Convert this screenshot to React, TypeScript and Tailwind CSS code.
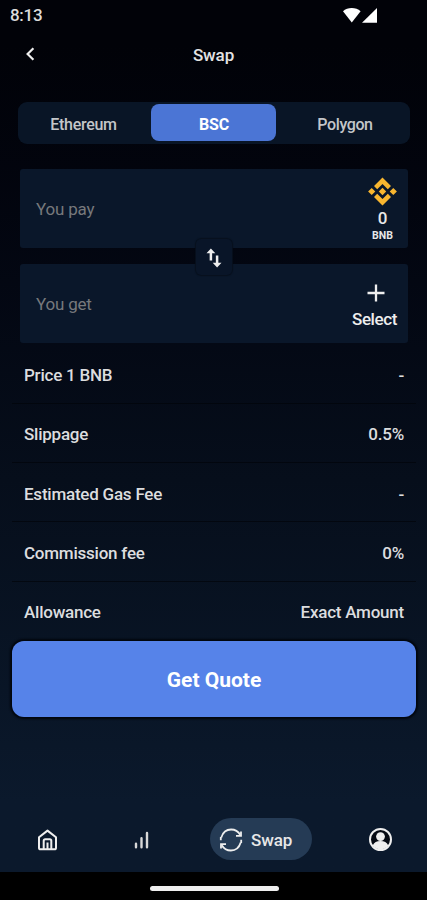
import React from "react";

const rows = [
  { label: "Price 1 BNB", value: "-" },
  { label: "Slippage", value: "0.5%" },
  { label: "Estimated Gas Fee", value: "-" },
  { label: "Commission fee", value: "0%" },
  { label: "Allowance", value: "Exact Amount" },
];

function StatusBar() {
  return (
    <div className="flex h-8 shrink-0 items-center justify-between pr-[49px] pb-[2px] pl-[10px]">
      <span className="text-[17px] leading-[30px] font-medium tracking-[-0.3px] text-[#dcdcdc]">8:13</span>
      <svg width="36" height="17" viewBox="0 0 36 17" fill="#fff">
        <path d="M1 4.2C5.5-.1 14-.1 18.6 4.2L9.8 15.6z" />
        <path d="M35 1v14.8H20z" />
      </svg>
    </div>
  );
}

function Header() {
  return (
    <header className="grid h-[46px] shrink-0 grid-cols-3 items-center px-[25px]">
      <svg width="11" height="16" viewBox="0 0 11 16" fill="none" stroke="#eee" strokeWidth="2.2">
        <path d="M8.4 1.2 2.6 7l5.8 5.8" />
      </svg>
      <h1 className="text-center text-[17px] leading-6 font-medium tracking-[-0.1px] text-[#e3e3e3]">Swap</h1>
    </header>
  );
}

function NetworkTabs() {
  return (
    <div className="mr-[17px] ml-[18px] mt-[24px] grid h-[42px] shrink-0 grid-cols-[133px_125px_1fr] items-center rounded-[9px] bg-[#091526] text-center text-[16px] text-[#c4c6c9]">
      <span className="pt-[3px] pr-[2px] font-medium tracking-[-0.3px]">Ethereum</span>
      <span className="mb-px flex h-[37px] items-center justify-center rounded-[8px] bg-[#4b75d5] pt-[4px] pl-px font-bold tracking-[-0.2px] text-white">BSC</span>
      <span className="pt-[3px] pl-1 font-medium tracking-[-0.4px]">Polygon</span>
    </div>
  );
}

function BnbLogo() {
  return (
    <svg className="shrink-0" width="29" height="29" viewBox="0 0 29 29" fill="#f8b62f">
      <path d="M14.5.5 23 9l-3.2 3.2-5.3-5.3-5.3 5.3L6 9zM14.5 28.5 23 20l-3.2-3.2-5.3 5.3-5.3-5.3L6 20z" />
      <path d="m14.5 10.8 3.7 3.7-3.7 3.7-3.7-3.7zM3.7 10.9l3.6 3.6-3.6 3.6-3.6-3.6zM25.3 10.9l3.6 3.6-3.6 3.6-3.6-3.6z" />
    </svg>
  );
}

function SwapCards() {
  return (
    <section className="relative mr-[19px] ml-5 mt-[25px] flex shrink-0 flex-col gap-4">
      <div className="flex h-[79px] items-center justify-between rounded-[3px] bg-[#0a172a] pr-[11px] pl-4">
        <span className="pt-[2px] text-[17px] tracking-[-0.2px] text-[#77797c]">You pay</span>
        <div className="flex w-[29px] flex-col items-center pt-px text-[#e8e8e8]">
          <BnbLogo />
          <span className="text-[17px] leading-[24px] font-medium">0</span>
          <span className="text-[10.5px] leading-[12px] font-bold">BNB</span>
        </div>
      </div>
      <div className="flex h-[79px] items-center justify-between rounded-[3px] bg-[#0a172a] pr-[11px] pl-4">
        <span className="pt-[2px] text-[17px] tracking-[-0.2px] text-[#77797c]">You get</span>
        <div className="flex flex-col pt-[7px] text-[#eee]">
          <svg className="ml-[15px]" width="18" height="18" viewBox="0 0 18 18" stroke="#eee" strokeWidth="2.3">
            <path d="M9 .5v17M.5 9h17" />
          </svg>
          <span className="mt-[5px] text-[17px] leading-6 font-medium tracking-[-0.4px]">Select</span>
        </div>
      </div>
      <button className="absolute top-[70px] left-[176px] flex size-[36px] items-center justify-center rounded-[5px] bg-[#091528] shadow-[0_0_1px_1px_#07101d]">
        <svg className="mt-px" width="16" height="20" viewBox="0 0 16 20" fill="none" stroke="#eee" strokeWidth="2.5">
          <path d="M4.9 12.5V3M11.1 7.5V17" />
          <path d="M4.9.5.5 5.2h8.8zM11.1 19.5l4.4-4.7H6.7z" fill="#eee" stroke="none" />
        </svg>
      </button>
    </section>
  );
}

function QuoteDetails() {
  return (
    <dl className="mr-[11px] ml-3 mt-[2px] shrink-0 text-[17px] font-medium tracking-[-0.23px] text-[#dcdddf]">
      {rows.map((row) => (
        <div key={row.label} className="flex h-[59.15px] items-center justify-between border-b border-[#01040a]/70 px-3 pt-[4px] last:border-0 last:pt-[3px]">
          <dt>{row.label}</dt>
          <dd>{row.value}</dd>
        </div>
      ))}
    </dl>
  );
}

function BottomNav() {
  return (
    <nav className="flex h-[65px] shrink-0 items-center pb-[1px] pl-[37px]">
      <svg className="mt-px" width="21" height="22" viewBox="0 0 21 22" fill="none" stroke="#eee" strokeWidth="2" strokeLinejoin="round">
        <path d="M2 8.3 10.5 1.6 19 8.3v10.4a1.6 1.6 0 0 1-1.6 1.6H3.6A1.6 1.6 0 0 1 2 18.7z" />
        <path d="M6.7 20v-8.2q0-1.5 1.5-1.5h4.6q1.5 0 1.5 1.5V20M10.5 13.5V20" />
      </svg>
      <svg className="mt-px ml-[76px]" width="15" height="18" viewBox="0 0 15 18" stroke="#d8d8d8" strokeWidth="2.4" strokeLinecap="round">
        <path d="M2 12.8v3.4M7.5 7.3v8.9M13 2v14.2" />
      </svg>
      <div className="ml-[61px] flex h-[42px] w-[102px] items-center rounded-full bg-[#253b55] pl-[9px]">
        <svg className="mt-px" width="24" height="24" viewBox="0 0 24 24" fill="none" stroke="#eee" strokeWidth="1.8">
          <path d="M2.3 9.5C3.7 4.8 7.5 1.5 12.1 1.5c3.9 0 7.2 2 9.1 5.3M21.7 14.5c-1.4 4.7-5.2 8-9.8 8-3.9 0-7.2-2-9.1-5.3" />
          <path d="M22 3.5v4.4h-5M2 20.5v-4.4h5" />
          <path d="M1.8 9v3.2M22.2 15v-3.2" />
        </svg>
        <span className="mt-[3px] ml-2 text-[17px] font-medium tracking-[-0.1px] text-[#e8e8e8]">Swap</span>
      </div>
      <svg className="ml-[57px]" width="23" height="23" viewBox="0 0 23 23">
        <circle cx="11.5" cy="11.5" r="10.5" fill="#060a13" stroke="#eee" strokeWidth="2" />
        <circle cx="11.5" cy="8.6" r="4.4" fill="#eee" />
        <path d="M3.7 17.5c1.3-3.1 4.1-4.5 7.8-4.5s6.5 1.4 7.8 4.5c-3.8 5.1-11.8 5.1-15.6 0" fill="#eee" />
      </svg>
    </nav>
  );
}

export default function App() {
  return (
    <div className="flex h-[900px] w-[427px] flex-col overflow-hidden bg-black font-['Roboto','Liberation_Sans',sans-serif]">
      <main className="flex h-[872px] flex-col bg-linear-to-b from-[#010208] from-5% via-[#060e1b] via-55% to-[#0b192c] to-92%">
        <StatusBar />
        <Header />
        <NetworkTabs />
        <SwapCards />
        <QuoteDetails />
        <button className="mr-[11px] ml-3 h-[76px] shrink-0 rounded-[12px] bg-[#5683e9] pt-[5px] text-[21px] font-bold text-white shadow-[0_0_2px_2px_#02060d]">
          Get Quote
        </button>
        <div className="flex-1" />
        <BottomNav />
      </main>
      <div className="flex h-7 items-center justify-center pt-[5px] pl-px">
        <div className="h-[5px] w-[129px] rounded-full bg-[#eee]" />
      </div>
    </div>
  );
}
